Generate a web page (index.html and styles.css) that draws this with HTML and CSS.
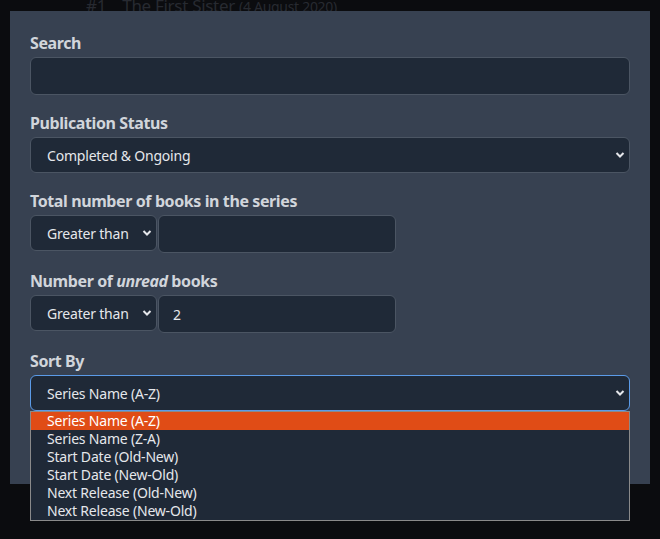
FILE: index.html
```html
<!DOCTYPE html>
<html lang="en">
<head>
	<meta charset="UTF-8">
	<title>Series filters</title>
	<link rel="stylesheet" href="styles.css">
</head>
<body>
	<!-- list behind the dialog -->
	<div class="series-row">
		<span class="series-num">#1</span>
		<span class="series-title">The First Sister</span>
		<span class="series-date">(4 August 2020)</span>
	</div>

	<div class="filter-panel">
		<div class="field">
			<label class="field-label">Search</label>
			<input type="text" class="text-input wide">
		</div>

		<div class="field">
			<label class="field-label">Publication Status</label>
			<select class="select-input wide">
				<option>Completed &amp; Ongoing</option>
			</select>
		</div>

		<div class="field">
			<label class="field-label">Total number of books in the series</label>
			<div class="compare-row">
				<select class="select-input compare">
					<option>Greater than</option>
				</select>
				<input type="text" class="text-input amount">
			</div>
		</div>

		<div class="field">
			<label class="field-label">Number of <em>unread</em> books</label>
			<div class="compare-row">
				<select class="select-input compare">
					<option>Greater than</option>
				</select>
				<input type="text" class="text-input amount" value="2">
			</div>
		</div>

		<div class="field sort-field">
			<label class="field-label">Sort By</label>
			<select class="select-input wide is-open">
				<option>Series Name (A-Z)</option>
			</select>
			<!-- open option list -->
			<ul class="option-list">
				<li class="selected">Series Name (A-Z)</li>
				<li>Series Name (Z-A)</li>
				<li>Start Date (Old-New)</li>
				<li>Start Date (New-Old)</li>
				<li>Next Release (Old-New)</li>
				<li>Next Release (New-Old)</li>
			</ul>
		</div>
	</div>
</body>
</html>
```

FILE: styles.css
```css
body {
	margin: 0;
	background: #0b0c0f;
	font-family: "Noto Sans", "DejaVu Sans", sans-serif;
	height: 539px;
	overflow: hidden;
}

/* row of the series list, dimmed by the dialog */
.series-row {
	height: 11px;
	padding-left: 86px;
	overflow: visible;
	color: #272a31;
	font-size: 17px;
	line-height: 22px;
	letter-spacing: -0.3px;
	white-space: nowrap;
	position: relative;
	top: -5px;
}
.series-num {
	margin-right: 12px;
}
.series-date {
	font-size: 14px;
}

/* dialog */
.filter-panel {
	position: relative;
	width: 600px;
	margin-left: 10px;
	padding: 20px 20px 73px;
	background: #374151;
	display: flex;
	flex-direction: column;
	gap: 16px;
}

.field {
	display: flex;
	flex-direction: column;
	gap: 2px;
}

.field-label {
	color: #d1d5db;
	font-size: 16px;
	font-weight: 700;
	line-height: 24px;
	letter-spacing: -0.4px;
}
.field-label em {
	font-style: italic;
}

.text-input,
.select-input {
	box-sizing: border-box;
	background-color: #1f2937;
	border: 1px solid #4b5563;
	border-radius: 6px;
	color: #e5e7eb;
	font-family: inherit;
	font-size: 14px;
	letter-spacing: -0.2px;
	margin: 0;
	outline: none;
}
.text-input {
	height: 38px;
	padding: 0 14px;
}
.select-input {
	-webkit-appearance: none;
	appearance: none;
	height: 36px;
	padding: 0 20px 0 16px;
	background-image: url("data:image/svg+xml,%3Csvg xmlns='http://www.w3.org/2000/svg' width='10' height='8' viewBox='0 0 10 8'%3E%3Cpath d='M1.5 2 L5 5.5 L8.5 2' fill='none' stroke='%23e5e7eb' stroke-width='2'/%3E%3C/svg%3E");
	background-repeat: no-repeat;
	background-position: right 4px center;
}
.wide {
	width: 600px;
}

.compare-row {
	display: flex;
	gap: 1px;
	align-items: flex-start;
}
.compare {
	width: 127px;
}
.amount {
	width: 238px;
}

/* focused sort select */
.select-input.is-open {
	border-color: #5b9be8;
}

.sort-field {
	position: relative;
}
.option-list {
	position: absolute;
	left: 0;
	top: 62px;
	width: 600px;
	box-sizing: border-box;
	margin: 0;
	padding: 0;
	list-style: none;
	background: #1f2937;
	border: 1px solid #8a8a8a;
	color: #e5e7eb;
	font-size: 14px;
	letter-spacing: -0.2px;
	z-index: 2;
}
.option-list li {
	height: 18px;
	line-height: 18px;
	padding-left: 16px;
}
.option-list li.selected {
	background: #e04c16;
	color: #fff;
}
```
